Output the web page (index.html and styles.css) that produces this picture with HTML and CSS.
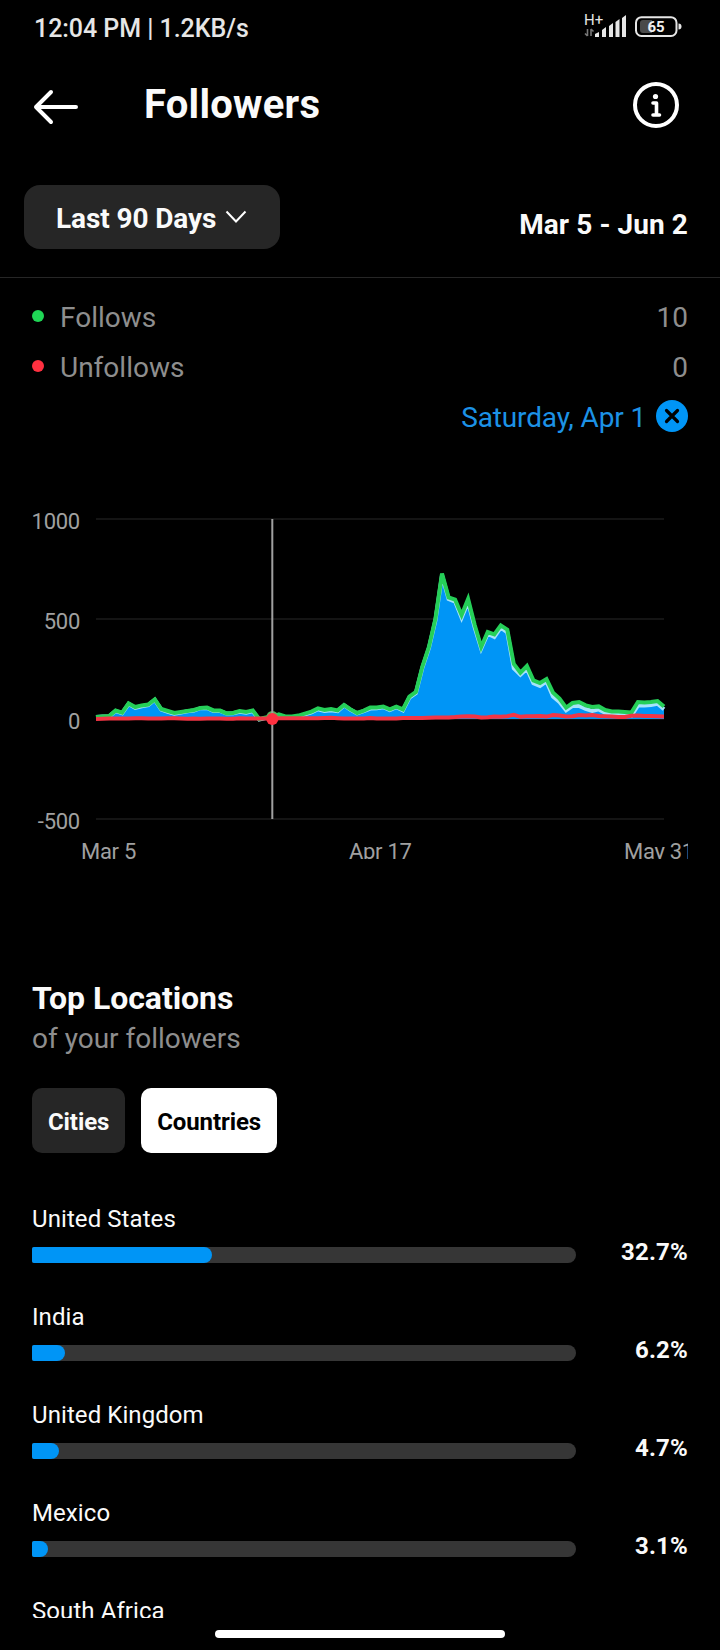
FILE: index.html
```html
<!DOCTYPE html>
<html lang="en">
<head>
    <meta charset="UTF-8">
    <meta name="viewport" content="width=device-width, initial-scale=1.0">
    <title>Followers</title>
    <link rel="stylesheet" href="styles.css">
</head>
<body>
    <div class="screen">
    <div class="status">
        <div class="time">12:04 PM | 1.2KB/s</div>
        <svg class="statusIcons" width="100" height="28" viewBox="0 0 100 28">
            <text class="net" x="0" y="13">H+</text>
            <path d="M3.5 17v7M1 21.500l2.500 2.500M7 24v-7M9.500 19.500L7 17" stroke="#777" stroke-width="1.600" fill="none"/>
            <path d="M11 25v-3l4-2v5zM18 25v-7l4-3v10zM25 25V14l4-3v14zM31.500 25V10l4-3v18zM38 25V6l4-3v22z" fill="#e6e6e6"/>
            <rect x="52" y="5.200" width="40.500" height="18.800" rx="5.500" fill="none" stroke="#e6e6e6" stroke-width="2"/>
            <path d="M59 8h9v13h-9q-3 0-3-3v-7q0-3 3-3z" fill="#4a4a4a"/>
            <path d="M94.500 11.500q3 0 3 3t-3 3z" fill="#e6e6e6"/>
            <text class="bat" x="72" y="20">65</text>
        </svg>
    </div>
    <div class="header">
        <svg class="back" width="46" height="36" viewBox="0 0 46 36">
            <path d="M18 3L3 18l15 15M3 18h40" fill="none" stroke="#fff" stroke-width="4" stroke-linecap="round" stroke-linejoin="round"/>
        </svg>
        <h1>Followers</h1>
        <svg class="info" width="46" height="46" viewBox="0 0 46 46">
            <circle cx="23" cy="23" r="21" fill="none" stroke="#fff" stroke-width="4"/>
            <circle cx="22.500" cy="14.500" r="2.600" fill="#fff"/>
            <path d="M20 21h3.500v12M20 33h6.500" fill="none" stroke="#fff" stroke-width="3.600" stroke-linecap="round" stroke-linejoin="round"/>
        </svg>
    </div>
    <div class="filter">
        <div class="period">
            <span>Last 90 Days</span>
            <svg width="22" height="14" viewBox="0 0 22 14">
                <path d="M1.500 1.500L11 11.500l9.500-10" fill="none" stroke="#fff" stroke-width="2"/>
            </svg>
        </div>
        <div class="range">Mar 5 - Jun 2</div>
    </div>
    <div class="legend">
        <div class="line"><i class="dot green"></i><span>Follows</span><b>10</b></div>
        <div class="line"><i class="dot red"></i><span>Unfollows</span><b>0</b></div>
        <div class="picked">
            <span>Saturday, Apr 1</span>
            <svg width="32" height="32" viewBox="0 0 32 32">
                <circle cx="16" cy="16" r="16" fill="#0095f6"/>
                <path d="M10.500 10.500l11 11M21.500 10.500l-11 11" stroke="#000" stroke-width="3.200" stroke-linecap="round"/>
            </svg>
        </div>
    </div>
    <svg class="chart" width="656" height="359" viewBox="32 500 656 359">
        <g class="grid">
            <path d="M96 519h568M96 619h568M96 719h568M96 819h568"/>
        </g>
        <g class="yLabel">
            <text x="80" y="529">1000</text>
            <text x="80" y="629">500</text>
            <text x="80" y="729">0</text>
            <text x="80" y="829">-500</text>
        </g>
        <g class="xLabel">
            <text x="81" y="859">Mar 5</text>
            <text x="349" y="859">Apr 17</text>
            <text x="624" y="859">May 31</text>
        </g>
        <path id="area"/>
        <path id="net"/>
        <path id="follows"/>
        <circle id="dotFollows" r="6"/>
        <path id="cursor"/>
        <path id="unfollows"/>
        <circle id="dotUnfollows" r="6"/>
    </svg>
    <div class="locations">
        <h2>Top Locations</h2>
        <p>of your followers</p>
        <div class="tabs">
            <div class="tab">Cities</div>
            <div class="tab on">Countries</div>
        </div>
        <ul>
            <li><div class="name">United States</div><div class="bar"><div class="fill" style="width: 180px"></div></div><div class="pct">32.7%</div></li>
            <li><div class="name">India</div><div class="bar"><div class="fill" style="width: 33px"></div></div><div class="pct">6.2%</div></li>
            <li><div class="name">United Kingdom</div><div class="bar"><div class="fill" style="width: 27px"></div></div><div class="pct">4.7%</div></li>
            <li><div class="name">Mexico</div><div class="bar"><div class="fill" style="width: 16px"></div></div><div class="pct">3.1%</div></li>
            <li><div class="name">South Africa</div></li>
        </ul>
    </div>
    <div class="home"></div>
    </div>
    <script>

        // daily values, Mar 5 - May 31

            let follows = [
                10, 13, 15, 42, 32, 78, 60, 68, 72, 98, 50, 40, 30, 35, 40, 45, 55, 57, 43, 42,
                28, 30, 40, 35, 43, 0, 8, 10, 23, 13, 12, 17, 27, 37, 53, 45, 50, 43, 70, 48,
                30, 42, 57, 57, 62, 48, 62, 48, 112, 135, 262, 362, 503, 727, 608, 597, 520, 600, 470, 360,
                435, 423, 468, 447, 275, 232, 265, 193, 180, 200, 132, 102, 57, 80, 85, 68, 60, 63, 45, 38,
                37, 35, 32, 85, 82, 85, 90, 62
            ]
            let unfollows = [
                0, 1, 2, 2, 3, 3, 4, 4, 2, 2, 3, 4, 4, 3, 1, 3, 1, 2, 3, 2,
                1, 1, 4, 3, 3, 3, 3, 0, 4, 4, 4, 4, 4, 4, 4, 5, 6, 4, 2, 2,
                2, 3, 5, 3, 3, 3, 3, 5, 5, 5, 5, 6, 7, 8, 8, 10, 13, 14, 12, 8,
                9, 13, 11, 14, 21, 11, 14, 14, 15, 12, 20, 17, 13, 14, 20, 18, 20, 15, 14, 12,
                10, 10, 16, 18, 15, 15, 14, 13
            ]

            let step = 568 / (follows.length - 1)
            let getX = (i) => (96 + i * step).toFixed(1)
            let getY = (v) => (719 - v / 5).toFixed(1)
            let line = (arr) => "M" + arr.map((v, i) => `${getX(i)} ${getY(v)}`).join("L")

            let net = follows.map((v, i) => v - unfollows[i])
            document.querySelector("#area").setAttribute("d", line(net) + "L664 719L96 719Z")
            document.querySelector("#net").setAttribute("d", line(net))
            document.querySelector("#follows").setAttribute("d", line(follows))
            document.querySelector("#unfollows").setAttribute("d", line(unfollows))

        // selected day

            let day = 27
            document.querySelector("#cursor").setAttribute("d", `M${getX(day)} 519V819`)
            let dots = { "#dotFollows": follows[day], "#dotUnfollows": unfollows[day] }
            for(let id in dots){
                let dot = document.querySelector(id)
                dot.setAttribute("cx", getX(day))
                dot.setAttribute("cy", getY(dots[id]))
            }
    </script>
</body>
</html>
```
FILE: styles.css
```css
*{padding: 0; margin: 0; box-sizing: border-box;}
ul{list-style: none;}
svg{display: block;}

body{
    background-color: #000;
    color : #fafafa;
    font-family: Roboto, "Liberation Sans", sans-serif;
}
.screen{
    width : 720px;
    height: 1650px;
    overflow: hidden;
}
.status{
    height: 56px;
    padding : 0 36px 0 34px;
    display: flex;
    justify-content: space-between;
    align-items: center;
}
.time{
    font-size: 25px;
    font-weight: 500;
    letter-spacing: -0.05px;
    color : #e6e6e6;
}
.statusIcons{
    margin-top: -4px;
    overflow: visible;
}
.net{
    font-size: 15px;
    fill: #e6e6e6;
}
.bat{
    font-size: 15px;
    font-weight: bold;
    fill: #f0f0f0;
    text-anchor: middle;
}
.header{
    height: 97px;
    padding : 0 41px 0 33px;
    display: flex;
    align-items: center;
}
.back{
    margin-top: 5px;
}
h1{
    margin-left: 65px;
    font-size: 40px;
    font-weight: bold;
    letter-spacing: 0.25px;
}
.info{
    margin-left: auto;
}
.filter{
    height: 125px;
    padding : 32px 32px 0 24px;
    border-bottom: 1px solid #262626;
    display: flex;
    justify-content: space-between;
    align-items: flex-start;
}
.period{
    width : 256px;
    height: 64px;
    padding : 2px 0 0 32px;
    border-radius: 16px;
    background-color: #262626;
    display: flex;
    align-items: center;
    gap: 9px;
    font-size: 28px;
    font-weight: bold;
    letter-spacing: -0.1px;
}
.period svg{
    margin-top: -3px;
}
.range{
    margin-top: 15px;
    line-height: 50px;
    font-size: 28px;
    font-weight: bold;
    letter-spacing: 0.08px;
}
.legend{
    height: 222px;
    padding : 14px 32px 0;
    font-size: 28px;
    line-height: 50px;
    color : #8e8e8e;
}
.line{
    height: 50px;
    padding-top: 2px;
    display: flex;
    align-items: center;
}
.line b{
    margin-left: auto;
    font-weight: normal;
}
.dot{
    width : 12px;
    height: 12px;
    margin : 0 16px 4px 0;
    border-radius: 50%;
}
.green{
    background-color: #1fd655;
}
.red{
    background-color: #ff3040;
}
.picked{
    height: 50px;
    display: flex;
    justify-content: flex-end;
    gap: 10px;
    line-height: 52px;
    letter-spacing: -0.14px;
    color : #1c92e6;
}
.picked svg{
    margin-top: 8px;
}
.chart{
    margin-left: 32px;
    overflow: hidden;
}
.chart path{
    fill: none;
    stroke-width: 4;
}
.chart .grid path{
    stroke: #141414;
    stroke-width: 2;
}
.chart text{
    font-size: 22px;
    fill: #a0a0a0;
}
.yLabel{
    text-anchor: end;
    letter-spacing: -0.25px;
}
.xLabel{
    letter-spacing: -0.3px;
}
.chart #area{
    fill: #0095f6;
}
#net{
    stroke: #a6e3fb;
}
#follows{
    stroke: #25cf58;
}
#unfollows{
    stroke: #f23545;
}
.chart #cursor{
    stroke: #a0a0a0;
    stroke-width: 2;
}
#dotFollows{
    fill: #5fae5c;
}
#dotUnfollows{
    fill: #ff3040;
}
.locations{
    height: 759px;
    padding : 119px 32px 0;
    overflow: hidden;
}
h2{
    font-size: 32px;
    line-height: 40px;
    font-weight: bold;
    letter-spacing: -0.05px;
}
.locations p{
    padding-top: 1px;
    font-size: 28px;
    line-height: 40px;
    color : #8e8e8e;
}
.tabs{
    margin-top: 29px;
    display: flex;
    gap: 16px;
}
.tab{
    height: 65px;
    padding : 3px 16px 0;
    border-radius: 10px;
    background-color: #262626;
    font-size: 24px;
    line-height: 63px;
    font-weight: bold;
    letter-spacing: -0.1px;
}
.on{
    background-color: #fff;
    color : #000;
}
.locations ul{
    margin-top: 50px;
}
.locations li{
    height: 98px;
    display: grid;
    grid-template-columns: 544px 1fr;
    grid-template-rows: 44px 16px;
}
.name{
    grid-column: 1 / 3;
    font-size: 24px;
    line-height: 32px;
    letter-spacing: 0.08px;
}
.bar{
    height: 16px;
    border-radius: 2px 8px 8px 2px;
    background-color: #363636;
}
.fill{
    height: 16px;
    border-radius: 2px 8px 8px 2px;
    background-color: #0095f6;
}
.pct{
    font-size: 24px;
    line-height: 10px;
    font-weight: bold;
    letter-spacing: 0.2px;
    text-align: right;
}
.home{
    width : 290px;
    height: 8px;
    margin : 12px auto 0;
    border-radius: 4px;
    background-color: #fff;
}
```
